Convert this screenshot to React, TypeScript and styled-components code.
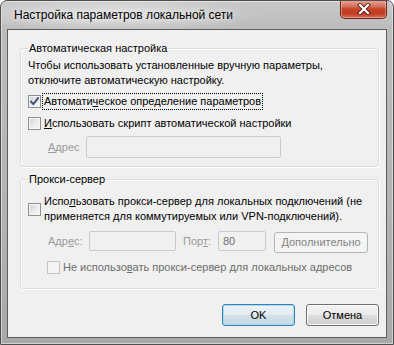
import React from "react";
import styled, { createGlobalStyle } from "styled-components";

const FONT = `"Liberation Sans", "Noto Sans", Arial, sans-serif`;

const Global = createGlobalStyle`
  html, body { margin: 0; padding: 0; background: #ffffff; }
  body { font-family: ${FONT}; font-size: 11px; color: #000; }
  * { box-sizing: border-box; }
`;

const Window = styled.div`
  width: 394px;
  height: 345px;
  display: flex;
  flex-direction: column;
  padding: 0 6px 6px;
  border: 1px solid #4f4f4f;
  border-radius: 7px 7px 0 0;
  background:
    radial-gradient(ellipse 150px 18px at 110px 14px, rgba(255,255,255,0.55), rgba(255,255,255,0) 100%),
    linear-gradient(to bottom, #c8c8c8 0px, #bcbcbc 28px, #b3b3b3 60%, #a9a9a9 100%);
  box-shadow: inset 0 0 0 1px rgba(255,255,255,0.45);
  overflow: hidden;
  white-space: nowrap;
`;

const TitleBar = styled.div`
  flex: none;
  height: 28px;
  display: flex;
  justify-content: space-between;
  align-items: flex-start;
  padding-left: 7px;
`;

const Title = styled.div`
  margin-top: 7px;
  font-size: 12px;
  line-height: 15px;
  color: #000;
  text-shadow: 0 0 6px rgba(255,255,255,0.9);
`;

const CloseButton = styled.div`
  width: 47px;
  height: 19px;
  margin-top: -1px;
  border: 1px solid #6a2418;
  border-top: none;
  border-radius: 0 0 5px 5px;
  background: linear-gradient(to bottom, #e9a99a 0%, #d7725d 35%, #c5432a 50%, #c13a22 75%, #d8705a 100%);
  box-shadow: inset 0 0 0 1px rgba(255,210,200,0.45);
  display: flex;
  align-items: center;
  justify-content: center;
`;

const Client = styled.div`
  flex: 1;
  min-height: 0;
  overflow: hidden;
  border: 1px solid #5e5e5e;
  background: #f0f0f0;
  padding: 0 7px 0 12px;
  display: flex;
  flex-direction: column;
`;

const Group = styled.fieldset<{ $mt: number; $pt: number; $pb: number }>`
  flex: none;
  margin: ${(p) => p.$mt}px 0 0 0;
  padding: ${(p) => p.$pt}px 7px ${(p) => p.$pb}px 7px;
  border: 1px solid #d5dfe5;
  border-radius: 3px;
  box-shadow: 1px 1px 0 #ffffff, inset 1px 1px 0 #ffffff;
  display: flex;
  flex-direction: column;
  min-width: 0;
`;

const Legend = styled.legend`
  padding: 0 1px;
  margin-left: 0;
  line-height: 15px;
`;

const Paragraph = styled.div`
  line-height: 15px;
`;

const CheckRow = styled.label<{ $mt: number; $indent?: number; $disabled?: boolean }>`
  display: flex;
  align-items: center;
  gap: 3px;
  margin-top: ${(p) => p.$mt}px;
  margin-left: ${(p) => p.$indent ?? 0}px;
  line-height: 15px;
  color: ${(p) => (p.$disabled ? "#6d6d6d" : "#000")};
`;

const Box = styled.span<{ $disabled?: boolean }>`
  flex: none;
  width: 13px;
  height: 13px;
  border: 1px solid ${(p) => (p.$disabled ? "#c4c4c4" : "#8e8f8f")};
  background: ${(p) =>
    p.$disabled
      ? "#f4f4f4"
      : "linear-gradient(135deg, #cfd2d6 0%, #e6e7e9 45%, #fbfbfb 100%)"};
  box-shadow: inset 0 0 0 1px ${(p) => (p.$disabled ? "#f4f4f4" : "#f6f6f6")};
  display: flex;
  align-items: center;
  justify-content: center;
`;

const Focus = styled.span`
  outline: 1px dotted #000;
  outline-offset: 0;
  padding: 0 1px;
  margin-left: -1px;
`;

const Acc = styled.u`
  text-decoration: underline;
  text-underline-offset: 1px;
`;

const FieldRow = styled.div<{ $mt: number; $indent: number }>`
  display: flex;
  align-items: flex-start;
  margin-top: ${(p) => p.$mt}px;
  margin-left: ${(p) => p.$indent}px;
`;

const FieldLabel = styled.span<{ $w: number; $ml?: number; $h: number }>`
  width: ${(p) => p.$w}px;
  margin-left: ${(p) => p.$ml ?? 0}px;
  height: ${(p) => p.$h}px;
  line-height: ${(p) => p.$h}px;
  color: #9a9a9a;
  flex: none;
`;

const Input = styled.div<{ $w: number; $h: number }>`
  width: ${(p) => p.$w}px;
  height: ${(p) => p.$h}px;
  border: 1px solid #c9cbcd;
  border-radius: 2px;
  background: #f0f0f0;
  color: #6d6d6d;
  line-height: ${(p) => p.$h - 2}px;
  padding-left: 4px;
  flex: none;
`;

const Button = styled.div<{ $w: number; $h: number; $variant?: "default" | "disabled"; $ml?: number; $mt?: number }>`
  width: ${(p) => p.$w}px;
  height: ${(p) => p.$h}px;
  margin-left: ${(p) => p.$ml ?? 0}px;
  margin-top: ${(p) => p.$mt ?? 0}px;
  flex: none;
  border-radius: 3px;
  display: flex;
  align-items: center;
  justify-content: center;
  line-height: 15px;
  border: 1px solid
    ${(p) => (p.$variant === "default" ? "#3c7fb1" : p.$variant === "disabled" ? "#b3b6b8" : "#707070")};
  color: ${(p) => (p.$variant === "disabled" ? "#838383" : "#000")};
  background: ${(p) =>
    p.$variant === "default"
      ? "linear-gradient(to bottom, #edf3f7 0%, #e4ecf1 50%, #d4e2ea 51%, #c4d7e2 100%)"
      : p.$variant === "disabled"
      ? "#f4f4f4"
      : "linear-gradient(to bottom, #f2f2f2 0%, #ebebeb 50%, #dddddd 51%, #cfcfcf 100%)"};
  box-shadow: inset 0 0 0 1px
    ${(p) => (p.$variant === "default" ? "#a5dbf3" : p.$variant === "disabled" ? "#f4f4f4" : "#fcfcfc")};
`;

const Footer = styled.div`
  flex: none;
  display: flex;
  justify-content: flex-end;
  gap: 11px;
  margin-top: 15px;
`;

const Check = () => (
  <svg width="9" height="9" viewBox="0 0 9 9">
    <path d="M1 4.6 L3.4 7 L8 1.2" fill="none" stroke="#3b5383" strokeWidth="2" strokeLinecap="square" strokeLinejoin="miter" />
  </svg>
);

const CloseX = () => (
  <svg width="14" height="12" viewBox="0 0 14 12">
    <path d="M3 2 L11 10 M11 2 L3 10" stroke="#5b1c12" strokeWidth="4" strokeLinecap="square" />
    <path d="M3 2 L11 10 M11 2 L3 10" stroke="#ffffff" strokeWidth="2.2" strokeLinecap="square" />
  </svg>
);

export default function App() {
  return (
    <>
      <Global />
      <Window>
        <TitleBar>
          <Title>Настройка параметров локальной сети</Title>
          <CloseButton>
            <CloseX />
          </CloseButton>
        </TitleBar>
        <Client>
          <Group $mt={11} $pt={2} $pb={8}>
            <Legend>Автоматическая настройка</Legend>
            <Paragraph>
              Чтобы использовать установленные вручную параметры,
              <br />
              отключите автоматическую настройку.
            </Paragraph>
            <CheckRow $mt={6}>
              <Box>
                <Check />
              </Box>
              <Focus>
                Автомати<Acc>ч</Acc>еское определение параметров
              </Focus>
            </CheckRow>
            <CheckRow $mt={7}>
              <Box />
              <span>
                <Acc>И</Acc>спользовать скрипт автоматической настройки
              </span>
            </CheckRow>
            <FieldRow $mt={5} $indent={20}>
              <FieldLabel $w={38} $h={22}>
                <Acc>А</Acc>дрес
              </FieldLabel>
              <Input $w={195} $h={22} />
            </FieldRow>
          </Group>
          <Group $mt={5} $pt={7} $pb={13}>
            <Legend>Прокси-сервер</Legend>
            <CheckRow $mt={0}>
              <Box />
              <span>
                Испо<Acc>л</Acc>ьзовать прокси-сервер для локальных подключений (не
                <br />
                применяется для коммутируемых или VPN-подключений).
              </span>
            </CheckRow>
            <FieldRow $mt={7} $indent={20}>
              <FieldLabel $w={41} $h={20}>
                Адр<Acc>е</Acc>с:
              </FieldLabel>
              <Input $w={87} $h={20} />
              <FieldLabel $w={35} $ml={7} $h={20}>
                Пор<Acc>т</Acc>:
              </FieldLabel>
              <Input $w={48} $h={20}>80</Input>
              <Button $w={94} $h={21} $ml={8} $mt={1} $variant="disabled">
                <span>
                  <Acc>Д</Acc>ополнительно
                </span>
              </Button>
            </FieldRow>
            <CheckRow $mt={7} $indent={19} $disabled>
              <Box $disabled />
              <span>
                Не использо<Acc>в</Acc>ать прокси-сервер для локальных адресов
              </span>
            </CheckRow>
          </Group>
          <Footer>
            <Button $w={73} $h={22} $variant="default">
              OK
            </Button>
            <Button $w={73} $h={22}>
              Отмена
            </Button>
          </Footer>
        </Client>
      </Window>
    </>
  );
}
